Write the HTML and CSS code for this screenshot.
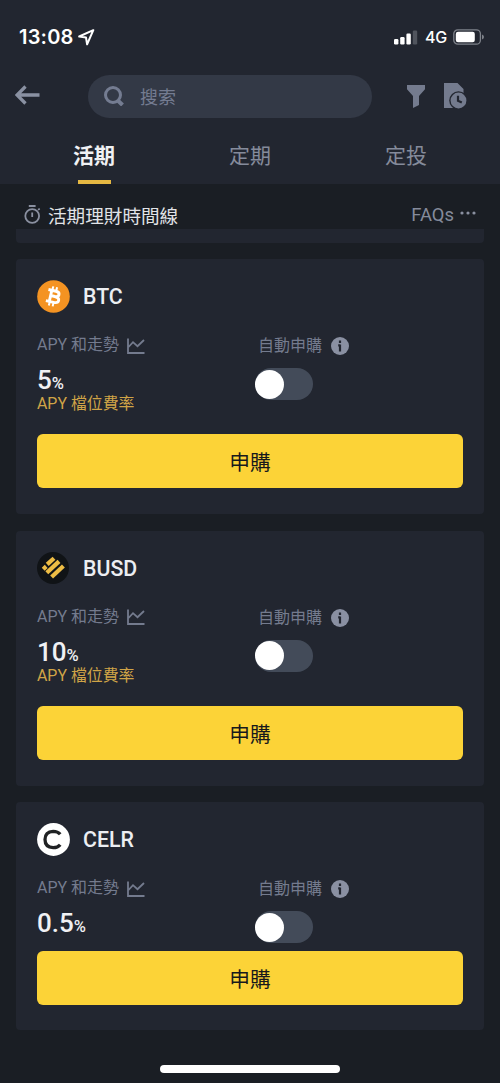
FILE: index.html
```html
<!DOCTYPE html>
<html lang="zh-Hant">
<head>
<meta charset="utf-8">
<meta name="viewport" content="width=device-width">
<title>活期</title>
<link rel="stylesheet" href="styles.css">
</head>
<body>
<svg width="0" height="0" class="defs">
  <symbol id="chart" viewBox="0 0 18 16"><path d="M1 0.5V15H17.5M1.5 9L6 4.2L10.5 8.2L17 2" fill="none" stroke="currentColor" stroke-width="1.8"/></symbol>
  <symbol id="info" viewBox="0 0 18 18"><circle cx="9" cy="9" r="9" fill="currentColor"/><path d="M9 3.4v2.5M7.2 8.4H9M9 7.4V14.4" fill="none" stroke="#222630" stroke-width="2.2"/></symbol>
</svg>
<div class="screen">
  <header class="header">
    <div class="status">
      <span class="time">13:08</span>
      <svg class="location" width="17" height="17" viewBox="0 0 17 17"><path d="M15.3 1.2L1.2 7.5L8 8.5L9.1 15.3Z" fill="none" stroke="#fff" stroke-width="2" stroke-linejoin="round"/></svg>
      <svg class="signal" width="24" height="15" viewBox="0 0 24 15"><g fill="#fff"><rect x="0" y="9" width="4.4" height="5.5" rx="1.2"/><rect x="6.2" y="7" width="4.4" height="7.5" rx="1.2"/><rect x="12.4" y="3.5" width="4.4" height="11" rx="1.2"/></g><rect x="18.8" y="0.5" width="4.4" height="14" rx="1.2" fill="#50545d"/></svg>
      <span class="network">4G</span>
      <svg class="battery" width="32" height="16" viewBox="0 0 32 16"><rect x=".8" y=".8" width="26.6" height="14.4" rx="4" fill="none" stroke="#7e828a" stroke-width="1.3"/><rect x="2.8" y="2.8" width="19" height="10.4" rx="2.2" fill="#fff"/><path d="M29 5.5q2 .6 2 2.5t-2 2.5z" fill="#7e828a"/></svg>
    </div>
    <div class="toolbar">
      <svg class="back" width="25" height="20" viewBox="0 0 25 20"><path d="M10.5 1.5L2 10L10.5 18.5M2.5 10H24.5" fill="none" stroke="#8a91a2" stroke-width="3.3"/></svg>
      <div class="search">
        <svg width="20" height="20" viewBox="0 0 20 20"><circle cx="9" cy="9" r="7.5" fill="none" stroke="#747c91" stroke-width="3"/><path d="M13.8 14.5L18.5 19" stroke="#747c91" stroke-width="4"/></svg>
        <span>搜索</span>
      </div>
      <svg class="filter" width="18" height="24" viewBox="0 0 18 24"><path d="M0 1H18V5.3L12 12V21L6 24V12L0 5.3Z" fill="#747b8e"/></svg>
      <svg class="history" width="23" height="26" viewBox="0 0 23 26"><path d="M0 0H13.5L19.5 6V12H0ZM0 11H15V25H0Z" fill="#747b8e"/><circle cx="14.5" cy="17.5" r="9.3" fill="#222630"/><circle cx="14.5" cy="17.5" r="7.9" fill="#747b8e"/><path d="M14 12.8V17.8L17.8 19.5" fill="none" stroke="#222630" stroke-width="2.2"/></svg>
    </div>
    <nav class="tabs">
      <span class="tab tab-active">活期</span>
      <span class="tab">定期</span>
      <span class="tab">定投</span>
    </nav>
  </header>

  <main class="content">
    <div class="timeline">
      <svg width="17" height="19" viewBox="0 0 17 19"><g fill="none" stroke="#8a90a0" stroke-width="1.8"><circle cx="8.2" cy="11" r="6.9"/><path d="M4.8 1H11.6M8.2 7.5V12M14 4.7L15.8 3.8"/></g></svg>
      <span class="timeline-title">活期理財時間線</span>
      <span class="faqs">FAQs</span>
      <svg class="dots" width="16" height="4" viewBox="0 0 16 4"><g fill="#8a90a0"><circle cx="2" cy="2" r="1.6"/><circle cx="8" cy="2" r="1.6"/><circle cx="14" cy="2" r="1.6"/></g></svg>
    </div>
    <div class="strip"></div>

    <section class="card">
      <div class="coin">
        <svg width="33" height="33" viewBox="0 0 33 33"><circle cx="16.5" cy="16.5" r="16.3" fill="#f49322"/><g transform="rotate(13 16.5 16.5)" fill="none" stroke="#fff"><path d="M10 10.8H17.7Q21.4 10.8 21.4 13.4Q21.4 16 17.7 16.2H13.5M17.7 16.2Q22.4 16.3 22.4 19.2Q22.4 22.2 17.9 22.2H10M13.5 10.8V22" stroke-width="2.9"/><path d="M14 6.7V11M17.9 6.7V11M14 22V26.3M17.9 22V26.3" stroke-width="2"/></g></svg>
        <span>BTC</span>
      </div>
      <div class="metrics">
        <div class="yield">
          <div class="label">APY 和走勢<svg class="chart"><use href="#chart"/></svg></div>
          <div class="value">5<small>%</small></div>
          <div class="tier">APY 檔位費率</div>
        </div>
        <div class="auto">
          <div class="label">自動申購<svg class="info"><use href="#info"/></svg></div>
          <div class="toggle"><i></i></div>
        </div>
      </div>
      <div class="button">申購</div>
    </section>

    <section class="card">
      <div class="coin">
        <svg width="33" height="33" viewBox="0 0 33 33"><circle cx="16" cy="16" r="16" fill="#101316"/><g stroke="#eebd45" stroke-width="4.2"><path d="M10.2 12.4L17 6.2"/><path d="M6.2 17.2L9.2 14.4"/><path d="M9.8 20.8L22 9.4"/><path d="M14.6 25L26.4 14"/></g></svg>
        <span>BUSD</span>
      </div>
      <div class="metrics">
        <div class="yield">
          <div class="label">APY 和走勢<svg class="chart"><use href="#chart"/></svg></div>
          <div class="value">10<small>%</small></div>
          <div class="tier">APY 檔位費率</div>
        </div>
        <div class="auto">
          <div class="label">自動申購<svg class="info"><use href="#info"/></svg></div>
          <div class="toggle"><i></i></div>
        </div>
      </div>
      <div class="button">申購</div>
    </section>

    <section class="card card-compact">
      <div class="coin">
        <svg width="33" height="33" viewBox="0 0 33 33"><circle cx="16.5" cy="16.5" r="16.4" fill="#fff"/><path d="M23.2 11.3Q20.8 8.3 16.2 8.3Q8 8.7 8 16.5Q8 24.3 16.2 24.7Q20.8 24.7 23.2 21.7" fill="none" stroke="#202224" stroke-width="3.3"/></svg>
        <span>CELR</span>
      </div>
      <div class="metrics">
        <div class="yield">
          <div class="label">APY 和走勢<svg class="chart"><use href="#chart"/></svg></div>
          <div class="value">0.5<small>%</small></div>
        </div>
        <div class="auto">
          <div class="label">自動申購<svg class="info"><use href="#info"/></svg></div>
          <div class="toggle"><i></i></div>
        </div>
      </div>
      <div class="button">申購</div>
    </section>
  </main>
  <div class="home-indicator"></div>
</div>
</body>
</html>
```
FILE: styles.css
```css
* { box-sizing: border-box; }
body { margin: 0; background: #1a1e24; font-family: Roboto, "Noto Sans CJK TC", sans-serif; }
svg { display: block; flex: none; }
.defs { position: absolute; }
.screen { width: 500px; height: 1083px; overflow: hidden; display: flex; flex-direction: column; }

.header { height: 184px; background: #222630; flex: none; }
.status { height: 74px; padding: 0 15px 0 19px; display: flex; align-items: center; color: #fff; }
.time { font: 600 20px/24px Inter, sans-serif; width: 55px; white-space: nowrap; letter-spacing: .2px; }
.location { margin-left: 4px; }
.signal { margin-left: auto; }
.network { font: 500 16px/20px Inter, sans-serif; margin: 0 6px 0 7px; letter-spacing: -.2px; }
.toolbar { height: 44px; padding: 0 0 0 15px; display: flex; align-items: center; }
.back { margin-top: -3px; }
.search { flex: none; width: 284px; height: 43px; margin-left: 48px; padding-left: 16px; border-radius: 22px; background: #333946; display: flex; align-items: center; gap: 16px; color: #747c91; font-size: 18px; }
.filter { margin-left: 35px; }
.history { margin-left: 19px; }
.tabs { height: 66px; padding: 0 16px; display: flex; }
.tab { flex: 1; display: flex; flex-direction: column; justify-content: space-between; align-items: center; padding-top: 22px; font-size: 21px; line-height: 32px; font-weight: 400; color: #858b9b; }
.tab-active { color: #f0f1f4; font-weight: 700; }
.tab-active::after { content: ""; width: 33px; height: 4px; background: #e5b842; }

.content { padding: 0 16px; }
.timeline { height: 45px; padding: 15px 8px 0; display: flex; align-items: center; }
.timeline-title { margin-left: 7px; font-size: 18.6px; color: #e1e3e7; }
.faqs { margin-left: auto; font-size: 18.4px; color: #858b9b; }
.dots { margin: -3px 0 0 6px; }
.strip { height: 14px; background: #222630; border-radius: 0 0 4px 4px; margin-bottom: 16px; }

.card { height: 255px; margin-bottom: 16.5px; padding: 21px; background: #222630; border-radius: 4px; }
.card-compact { height: 228px; }
.coin { height: 33px; display: flex; align-items: center; gap: 13px; font-size: 21.3px; font-weight: 500; color: #eceef2; }
.metrics { height: 99px; margin-top: 22px; display: flex; }
.card-compact .metrics { height: 73px; }
.yield { width: 218px; }
.label { height: 20px; display: flex; align-items: center; font-size: 16px; line-height: 24px; color: #747b8e; white-space: nowrap; }
.chart { width: 18px; height: 16px; margin: 1px 0 0 8px; }
.info { width: 18px; height: 18px; margin-left: 9px; color: #8a90a2; }
.auto .label { height: 22px; padding-left: 3px; }
.value { height: 28px; margin-top: 11px; font-size: 26px; line-height: 28px; font-weight: 500; color: #f0f1f4; }
.value small { font-size: 16.5px; font-weight: 500; }
.tier { line-height: 20px; font-size: 15.9px; color: #d0a447; }
.toggle { width: 58px; height: 32px; margin-top: 11px; border-radius: 16px; background: #434b59; display: flex; align-items: center; }
.toggle i { width: 29px; height: 29px; border-radius: 50%; background: #fff; }
.button { height: 54px; border-radius: 6px; background: #fcd337; color: #17191c; font-size: 20.7px; font-weight: 400; display: flex; align-items: center; justify-content: center; }
.home-indicator { width: 180px; height: 8px; border-radius: 4px; background: #fff; margin: auto auto 10px; }
```
